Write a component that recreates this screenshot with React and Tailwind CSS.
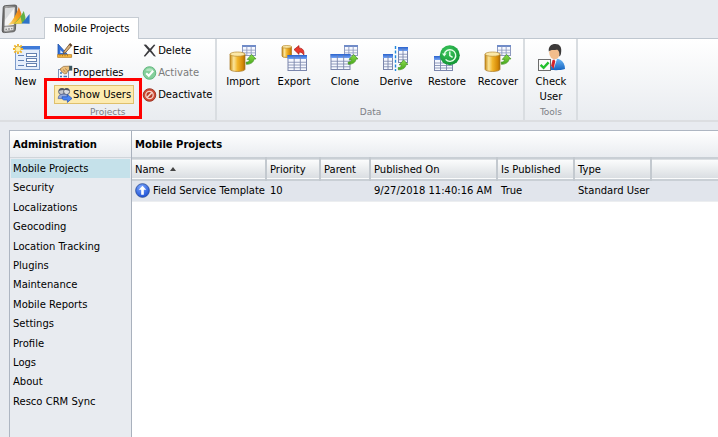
import React from "react";

function Defs() {
  return (
    <svg className="absolute h-0 w-0" aria-hidden="true">
      <defs>
        <linearGradient id="gold" x1="0" x2="1" y1="0" y2="0">
          <stop offset="0" stopColor="#c98a12" />
          <stop offset="0.25" stopColor="#fbe59a" />
          <stop offset="0.5" stopColor="#f2b62c" />
          <stop offset="0.85" stopColor="#d48806" />
          <stop offset="1" stopColor="#a96a08" />
        </linearGradient>
        <linearGradient id="tableHead" x1="0" x2="0" y1="0" y2="1">
          <stop offset="0" stopColor="#2a62cc" />
          <stop offset="1" stopColor="#74a4f4" />
        </linearGradient>
        <linearGradient id="leaf" x1="0" x2="0" y1="0" y2="1">
          <stop offset="0" stopColor="#8bdc4c" />
          <stop offset="1" stopColor="#47a81a" />
        </linearGradient>
        <linearGradient id="suit" x1="0" x2="0" y1="0" y2="1">
          <stop offset="0" stopColor="#6cb8f6" />
          <stop offset="1" stopColor="#1463c0" />
        </linearGradient>
        <linearGradient id="phone" x1="0" x2="1" y1="0" y2="0">
          <stop offset="0" stopColor="#4e4e4e" />
          <stop offset="0.25" stopColor="#a9a9a9" />
          <stop offset="1" stopColor="#6c6c6c" />
        </linearGradient>
        <linearGradient id="flame" x1="0" x2="1" y1="1" y2="0">
          <stop offset="0" stopColor="#fbe08a" />
          <stop offset="0.5" stopColor="#f6a81c" />
          <stop offset="1" stopColor="#e2641c" />
        </linearGradient>
        <radialGradient id="clock" cx="0.4" cy="0.3" r="0.8">
          <stop offset="0" stopColor="#3cc65c" />
          <stop offset="1" stopColor="#0d8f30" />
        </radialGradient>
        <radialGradient id="badge" cx="0.4" cy="0.25" r="0.8">
          <stop offset="0" stopColor="#7da8ff" />
          <stop offset="1" stopColor="#174bd2" />
        </radialGradient>
      </defs>
    </svg>
  );
}

function Big({ children }) {
  return (
    <svg viewBox="0 0 32 32" className="h-8 w-8 shrink-0" aria-hidden="true">
      {children}
    </svg>
  );
}

function Small({ children }) {
  return (
    <svg viewBox="0 0 16 16" className="h-4 w-4 shrink-0" aria-hidden="true">
      {children}
    </svg>
  );
}

function Cylinder({ x, y, w, h }) {
  const r = w / 2;
  const e = w / 7;
  return (
    <g>
      <path
        d={`M${x} ${y + e}V${y + h - e}A${r} ${e} 0 0 0 ${x + w} ${y + h - e}V${y + e}Z`}
        fill="url(#gold)"
        stroke="#a87720"
        strokeWidth="0.7"
      />
      <ellipse cx={x + r} cy={y + e} rx={r} ry={e} fill="#fbe8a8" stroke="#b8892c" strokeWidth="0.7" />
    </g>
  );
}

function Grid({ x, y, w, h, cols = 3, strong = true }) {
  const head = strong ? 4 : 2;
  const rows = strong ? 4 : 3;
  const step = (h - head) / rows;
  const line = strong ? "#7b86ac" : "#8e9abf";
  return (
    <g>
      <rect x={x} y={y} width={w} height={h} fill="#f6f8fe" stroke={line} strokeWidth="1" />
      {Array.from({ length: rows - 1 }, (_, i) => (
        <path key={i} d={`M${x} ${y + head + step * (i + 1)}h${w}`} stroke={line} strokeWidth="0.8" />
      ))}
      <rect x={x - 0.5} y={y - 0.5} width={w + 1} height={head} fill={strong ? "url(#tableHead)" : "#6f8bc8"} />
      {Array.from({ length: cols - 1 }, (_, i) => (
        <path key={i} d={`M${x + (w / cols) * (i + 1)} ${y + 1}v${h - 1}`} stroke={line} strokeWidth="0.9" />
      ))}
    </g>
  );
}

function GreenArrow({ x, y }) {
  return (
    <path
      transform={`translate(${x} ${y})`}
      d="M5.6 0L10 4.4L7.9 4.6C7.8 7.7 4.8 9.8 .4 9.8L.2 7.6C2.6 7.6 3.4 6.4 3.4 4.9L1.2 4.9Z"
      fill="url(#leaf)"
      stroke="#3d8f1c"
      strokeWidth="0.7"
    />
  );
}

const NewIcon = () => (
  <Big>
    <rect x="5.5" y="4.5" width="24" height="23" fill="#e6eefb" stroke="#7d9ccc" />
    <rect x="5" y="4" width="25" height="4" fill="#3f7ad8" />
    <rect x="5" y="7" width="25" height="1" fill="#8fb4ee" />
    <path d="M8 13.500h6M8 18.500h6M8 23.500h6" stroke="#5f7fb4" />
    <rect x="16.500" y="11.500" width="10" height="3" fill="#fff" stroke="#6480b0" />
    <rect x="16.500" y="16.500" width="10" height="3" fill="#fff" stroke="#6480b0" />
    <rect x="16.500" y="21.500" width="10" height="3" fill="#fff" stroke="#6480b0" />
    <path d="M8 2v10M3 7h10M4.300 3.300l7.400 7.400M11.700 3.300l-7.400 7.400" stroke="#f0b428" strokeWidth="1.8" />
    <circle cx="8" cy="7" r="2.600" fill="#fff0a8" />
  </Big>
);

const ImportIcon = () => (
  <Big>
    <Grid x={15.5} y={3.5} w={13} h={10} strong={false} />
    <Cylinder x={3} y={10} w={15} h={19.5} />
    <GreenArrow x={19} y={12.5} />
  </Big>
);

const ExportIcon = () => (
  <Big>
    <Cylinder x={4} y={3.5} w={9.5} h={12} />
    <path d="M16 7.6L21 3.6V6C25 6 26.4 9 25.8 13C24.6 10.9 23.4 10 21 10.2V12.4Z" fill="#e8382f" stroke="#a81c18" strokeWidth="0.7" />
    <Grid x={10} y={13.5} w={18.5} h={15} />
  </Big>
);

const CloneIcon = () => (
  <Big>
    <Grid x={15.5} y={3.5} w={13} h={10} strong={false} />
    <Grid x={2} y={12.5} w={19} h={15} />
    <GreenArrow x={19} y={12.5} />
  </Big>
);

const DeriveIcon = () => (
  <Big>
    <Grid x={3.5} y={12.5} w={9} h={15} cols={2} />
    <Grid x={18.5} y={5.5} w={9} h={15} cols={2} />
    <path d="M15.5 4v25" stroke="#2089dc" strokeWidth="1.4" strokeDasharray="3 1.6" />
    <GreenArrow x={18} y={18} />
  </Big>
);

const RestoreIcon = () => (
  <Big>
    <Grid x={3.5} y={14.5} w={18} h={14} />
    <circle cx="18.8" cy="13.2" r="10" fill="url(#clock)" />
    <path d="M13.2 12.6A5.8 5.8 0 1 1 14.6 17.4" fill="none" stroke="#e6ffe9" strokeWidth="1.4" />
    <path d="M11 11.6h4.6l-2.3 3Z" fill="#e6ffe9" />
    <path d="M18.8 9.6v4l2.8 1.8" fill="none" stroke="#e6ffe9" strokeWidth="1.4" />
  </Big>
);

const CheckUserIcon = () => (
  <Big>
    <path d="M12 27C12 20 15 16.5 20.5 16.5C27 17 29.8 21 30 27C25 28.6 17 28.6 12 27Z" fill="url(#suit)" />
    <path d="M15 17L19 16L22 17L19 26L15 23Z" fill="#f6f7fb" />
    <path d="M17.6 18l1.8-.4l.8 2l-1.6 7.4l-2.4-3.6Z" fill="#d2232a" />
    <ellipse cx="19.6" cy="10.6" rx="5.4" ry="6.6" fill="#f2bd8c" />
    <path d="M13.8 9.6C13.2 4.6 16 2 20.4 2C25 2 27.2 5.4 26 11.4C25.6 13.6 24.6 14.4 24.2 14.4C24.8 11 24 9 22.4 7.8C19.4 8.2 16 7.4 13.8 9.6Z" fill="#3c3a3a" />
    <rect x="3.5" y="17.5" width="12" height="11" fill="#fafafa" stroke="#6c6c6c" />
    <path d="M5.6 22.8l3 3l5-5.4" fill="none" stroke="#22c02c" strokeWidth="2.4" />
  </Big>
);

const EditIcon = () => (
  <Small>
    <path d="M1 1V12H11Z" fill="#3270d8" stroke="#2050a4" strokeWidth="0.8" />
    <path d="M3.400 7v3h2.800Z" fill="#eaf1fd" />
    <path d="M13 .5L15 2.200L8.600 9.600L6.400 10.600L7 8.200Z" fill="#d9b27c" stroke="#6f4a20" strokeWidth="0.8" />
    <path d="M12 1.700L13 .5L15 2.200L14 3.400Z" fill="#5a3c28" />
    <path d="M.6 11.600h14v2.800H.6Z" fill="#f8b73c" stroke="#b0761c" strokeWidth="0.7" />
    <path d="M3 12v1.200M5.500 12v1.200M8 12v1.200M10.500 12v1.200" stroke="#8c5c14" strokeWidth="0.6" />
  </Small>
);

const PropertiesIcon = () => (
  <Small>
    <rect x="1.5" y="4.5" width="10" height="10" fill="#f4f7fc" stroke="#7d93b8" />
    <path d="M3 8h2M3 11.500h2M6.500 11.500h3.500" stroke="#3c78b8" strokeWidth="1.6" />
    <path d="M3 4L6.500 1.400L12.600 1.200V5.200L10.800 5.600L9.600 8.600L7.400 8.800L4.400 6.400Z" fill="#ecc07c" stroke="#8c6430" strokeWidth="0.7" />
    <path d="M6 4.600l2.400 2.200M8.200 3.600l2.200 1.900" stroke="#a0743c" strokeWidth="0.8" />
    <path d="M12.200 .8h3v4.800h-3Z" fill="#3a5560" />
  </Small>
);

const UsersIcon = () => (
  <Small>
    <circle cx="4.600" cy="4.600" r="3" fill="#c4c6cc" stroke="#565c6c" strokeWidth="0.9" />
    <circle cx="9.600" cy="4.600" r="3" fill="#dcdde0" stroke="#565c6c" strokeWidth="0.9" />
    <path d="M1.800 4.200C2 .8 6 .4 7.400 2C9 .4 12.400 .8 12.600 4C10 2.800 4.600 2.800 1.800 4.200Z" fill="#505460" />
    <path d="M1.200 11.600C1.200 8.400 3 7.200 6 7.200C9.600 7.200 11.600 8.400 11.800 11.600Z" fill="#92a8dc" stroke="#4a62a0" strokeWidth="0.7" />
    <path d="M5 9.800h5.400V7.400L15 11.400L10.400 15.400V13H7.400C5.800 13 5 12 5 9.800Z" fill="#4a84f2" stroke="#214fb4" strokeWidth="0.7" />
  </Small>
);

const DeleteIcon = () => (
  <Small>
    <path d="M1.6 1.8L4 1.4L8 5.8L12 1.4L13.4 2L9.2 7.2L14 13.4L12 13.2L7.8 8.6L3 13.8L1.8 13L6.4 7.2Z" fill="#3a3a3e" />
  </Small>
);

const ActivateIcon = () => (
  <Small>
    <circle cx="7.5" cy="8" r="6.3" fill="#84cf9a" stroke="#5bb37a" strokeWidth="0.9" />
    <path d="M3.6 5.4C5 2.6 10 2.6 11.4 5.4C9 6.6 6 6.4 3.6 5.4Z" fill="#b2e5c0" />
    <path d="M4.2 8.2l2.6 2.6l4.4-5" fill="none" stroke="#fff" strokeWidth="2.1" />
  </Small>
);

const DeactivateIcon = () => (
  <Small>
    <circle cx="7.5" cy="8" r="6.3" fill="#d04a34" stroke="#96301f" strokeWidth="0.9" />
    <circle cx="7.5" cy="8" r="3.7" fill="#b53c28" stroke="#f5d2c8" strokeWidth="1.3" />
    <path d="M4.9 10.6l5.2-5.2" stroke="#f5d2c8" strokeWidth="1.5" />
  </Small>
);

const UpIcon = () => (
  <svg viewBox="0 0 16 16" className="h-[15px] w-[15px] shrink-0" aria-hidden="true">
    <circle cx="8" cy="8" r="7.3" fill="url(#badge)" stroke="#2a4c98" strokeWidth="0.9" />
    <path d="M8 3l4 4.3H9.4V12.4H6.6V7.3H4Z" fill="#fff" />
  </svg>
);

const Logo = () => (
  <svg viewBox="0 0 32 34" className="h-[34px] w-8" aria-hidden="true">
    <path d="M5.400 5.600L14.800 5Q17 5 16.800 7L15.400 29.600Q15.200 31.600 13.200 31.800L4.400 32.600Q2 32.700 2.200 30.400L3.200 7.600Q3.400 5.700 5.400 5.600Z" fill="url(#phone)" stroke="#4c4c4c" strokeWidth="0.8" />
    <path d="M5.400 8.200L14.800 7.600L13.800 25L4.600 25.800Z" fill="#f4f4f4" />
    <path d="M5.400 8.200L14.800 7.600L5 20Z" fill="#d9dbdd" />
    <path d="M4.400 27.200L13.600 26.400L13.300 30L4.200 30.800Z" fill="#e4e4e4" />
    <path d="M5.400 29.200h1.600M8 29h2M11 28.700h1.400" stroke="#707070" strokeWidth="1.100" />
    <path d="M8 24.800C13 21 16.500 14 18.800 7L21.500 14L20 21.500C16 23.500 12 24.500 8 24.800Z" fill="url(#flame)" />
    <path d="M13.500 23.800C18 20.500 21 16 23.800 11L25.400 17V22.800C21.500 23.500 17.500 24 13.500 23.800Z" fill="#62b045" />
    <path d="M13.500 23.800C17 21.800 18.800 19.600 20.600 17L22 23.400Z" fill="#f5c73a" />
    <path d="M21.500 23.400C24.500 20.500 27 17 29.600 14V23.800Z" fill="#2f74c8" />
  </svg>
);

function LargeButton({ icon, label }) {
  return (
    <button type="button" className="flex w-[51px] flex-col items-center pt-[3px] leading-[15px]">
      {icon}
      <span className="w-min">{label}</span>
    </button>
  );
}

function SmallButton({ icon, label, active, disabled }) {
  return (
    <button
      type="button"
      disabled={disabled}
      className={
        "flex h-[19px] items-center whitespace-nowrap border px-0.5 " +
        (active ? "border-[#dfc06c] bg-[#fdebb0] " : "border-transparent ") +
        (disabled ? "text-[#7b7b7b]" : "")
      }
    >
      {icon}
      {label}
    </button>
  );
}

function Group({ title, children }) {
  return (
    <section className="flex flex-col justify-between border-r-2 border-[#d9dde1] pb-0.5">
      <div className="flex">{children}</div>
      <h2 className="text-center text-[9px] leading-[12px] text-[#7d8086]">{title}</h2>
    </section>
  );
}

const tools = [
  ["Import", <ImportIcon />],
  ["Export", <ExportIcon />],
  ["Clone", <CloneIcon />],
  ["Derive", <DeriveIcon />],
  ["Restore", <RestoreIcon />],
  ["Recover", <ImportIcon />],
];

const nav = [
  "Mobile Projects",
  "Security",
  "Localizations",
  "Geocoding",
  "Location Tracking",
  "Plugins",
  "Maintenance",
  "Mobile Reports",
  "Settings",
  "Profile",
  "Logs",
  "About",
  "Resco CRM Sync",
];

const headCell = "border-r-2 border-[#c3c9cf] px-[3px] text-left font-normal";

export default function App() {
  return (
    <div className="flex min-h-screen flex-col bg-[#e8ebf0] font-['DejaVu_Sans',Verdana,sans-serif] text-[10px] text-black">
      <Defs />
      <header className="flex h-[38px] items-end">
        <div className="w-11 self-start">
          <Logo />
        </div>
        <button type="button" className="relative -mb-px h-[22px] border border-b-0 border-[#c6ccd3] bg-white px-[9px]">
          Mobile Projects
        </button>
      </header>

      <div className="flex h-[84px] border-t border-b-2 border-t-[#bfc7d0] border-b-[#dcdee1] bg-linear-to-b from-white to-[#e9ecf0]">
        <Group title="Projects">
          <LargeButton icon={<NewIcon />} label="New" />
          <div className="flex flex-col items-start gap-[3px] pt-0.5 pl-[3px]">
            <SmallButton icon={<EditIcon />} label="Edit" />
            <SmallButton icon={<PropertiesIcon />} label="Properties" />
            <div className="relative">
              <SmallButton icon={<UsersIcon />} label="Show Users" active />
              <div className="pointer-events-none absolute -top-[7px] -right-[8px] -bottom-[15px] -left-[10px] border-[3px] border-[#ff0000]" />
            </div>
          </div>
          <div className="flex flex-col items-start gap-[3px] pt-0.5 pl-[5px]">
            <SmallButton icon={<DeleteIcon />} label="Delete" />
            <SmallButton icon={<ActivateIcon />} label="Activate" disabled />
            <SmallButton icon={<DeactivateIcon />} label="Deactivate" />
          </div>
        </Group>
        <Group title="Data">
          {tools.map(([label, icon]) => (
            <LargeButton key={label} icon={icon} label={label} />
          ))}
        </Group>
        <Group title="Tools">
          <LargeButton icon={<CheckUserIcon />} label="Check User" />
        </Group>
      </div>

      <main className="mt-2 ml-[9px] flex flex-1 border-t border-l border-[#aeb6c2]">
        <nav className="w-[121px] shrink-0">
          <h2 className="h-[27px] border-b border-[#d0d5da] bg-linear-to-b from-white to-[#e9ecf0] pl-[3px] font-bold leading-[28px]">
            Administration
          </h2>
          <ul className="flex h-[253px] flex-col justify-between px-px pt-px">
            {nav.map((item, i) => (
              <li key={item}>
                <a
                  href="#"
                  className={"block pl-0.5 leading-[19px] " + (i === 0 ? "bg-[#c5e1ea]" : "")}
                >
                  {item}
                </a>
              </li>
            ))}
          </ul>
        </nav>
        <section className="min-w-0 flex-1 border-l border-[#a9b1bd] bg-white">
          <h1 className="h-[26px] bg-linear-to-b from-white to-[#e9ecf0] pl-[3px] font-bold leading-[28px]">
            Mobile Projects
          </h1>
          <table className="w-full table-fixed border-collapse whitespace-nowrap">
            <thead>
              <tr className="h-[22px] border-y-2 border-[#c9cfd5] bg-linear-to-b from-[#fbfcfc] to-[#dadee2]">
                <th className={headCell + " w-[134px]"}>
                  <span className="flex items-center gap-[5px]">
                    Name
                    <svg viewBox="0 0 6 4" className="h-1 w-1.5" aria-hidden="true">
                      <path d="M0 4L3 0L6 4Z" fill="#444" />
                    </svg>
                  </span>
                </th>
                <th className={headCell + " w-[54px]"}>Priority</th>
                <th className={headCell + " w-[50px]"}>Parent</th>
                <th className={headCell + " w-[127px]"}>Published On</th>
                <th className={headCell + " w-[77px]"}>Is Published</th>
                <th className={headCell + " w-[77px]"}>Type</th>
                <td />
              </tr>
            </thead>
            <tbody>
              <tr className="h-[21px] border-b border-[#eceef0] bg-[#e1e5ec]">
                <td className="pl-[3px]">
                  <span className="flex items-center gap-[3px]">
                    <UpIcon />
                    Field Service Template
                  </span>
                </td>
                <td className="px-1">10</td>
                <td />
                <td className="pl-1">9/27/2018 11:40:16 AM</td>
                <td className="px-1">True</td>
                <td className="px-1">Standard User</td>
                <td />
              </tr>
            </tbody>
          </table>
        </section>
      </main>
    </div>
  );
}
